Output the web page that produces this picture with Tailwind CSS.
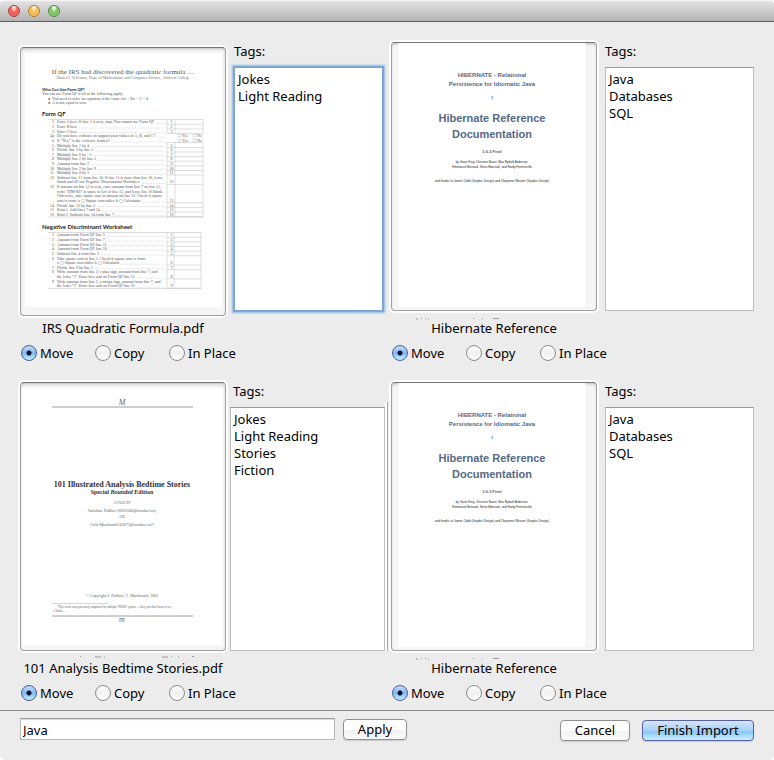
<!DOCTYPE html>
<html lang="en">
<head>
<meta charset="utf-8">
<title>Import Documents</title>
<script src="https://cdn.jsdelivr.net/npm/@tailwindcss/browser@4"></script>
</head>
<body class="bg-white font-['Noto_Sans','Open_Sans',sans-serif] text-[13px] leading-5 text-black">

<!-- Page artwork shared by the previews -->
<svg class="hidden" aria-hidden="true">
  <symbol id="hibernate-page" viewBox="392 43 204 267">
    <rect x="398.5" y="43" width="187" height="264" fill="#fff"/>
    <g font-family="Liberation Sans, Arial, sans-serif" font-weight="bold" text-anchor="middle" fill="#566986">
      <text x="492" y="76.5" font-size="6">HIBERNATE - Relational</text>
      <text x="492" y="86" font-size="6">Persistence for Idiomatic Java</text>
      <text x="492" y="98.5" font-size="4">1</text>
      <text x="492" y="122" font-size="11">Hibernate Reference</text>
      <text x="492" y="138" font-size="11">Documentation</text>
      <text x="492" y="152.5" font-size="4">3.6.3.Final</text>
    </g>
    <g font-family="Liberation Sans, Arial, sans-serif" font-size="3" text-anchor="middle" fill="#222">
      <text x="492" y="163">by Gavin King, Christian Bauer, Max Rydahl Andersen,</text>
      <text x="492" y="168">Emmanuel Bernard, Steve Ebersole, and Hardy Ferentschik</text>
      <text x="492" y="182">and thanks to James Cobb (Graphic Design) and Cheyenne Weaver (Graphic Design)</text>
    </g>
  </symbol>
</svg>

<div class="flex min-h-screen flex-col overflow-hidden rounded-[5px] bg-[#ececec]">
  <header class="flex h-[22px] items-center gap-2 border-b border-[#5c5c5c] bg-linear-to-b from-[#e6e6e6] to-[#b3b3b3] pl-2 shadow-[inset_0_1px_0_#f6f6f6]">
    <button type="button" aria-label="Close" class="size-3 rounded-full border border-[#a3403b] bg-[radial-gradient(ellipse_at_50%_10%,#ffe9e6_10%,#f2605a_45%,#ee5f5a_65%,#ffb5a8)]"></button>
    <button type="button" aria-label="Minimize" class="size-3 rounded-full border border-[#a97830] bg-[radial-gradient(ellipse_at_50%_10%,#fff6e0_10%,#f5b94f_45%,#f5bb55_65%,#ffee9c)]"></button>
    <button type="button" aria-label="Zoom" class="size-3 rounded-full border border-[#4f8440] bg-[radial-gradient(ellipse_at_50%_10%,#f0ffe9_10%,#82c265_45%,#84c46a_65%,#ccf7a9)]"></button>
  </header>

  <main class="grid grid-cols-2 gap-x-2 gap-y-[19px] px-5 pt-5 pb-[7px]">

    <section>
      <div class="flex h-[269px] gap-2">
        <div class="mt-[5px] -mb-[5px] h-[269px] w-[206px] shrink-0 overflow-hidden rounded-[4px] border border-[#a0a0a0] border-t-[#747474] bg-[#f5f5f5] shadow-[0_0_0_2px_#fdfdfd,inset_0_2px_3px_-1px_#bbb]">
          <svg id="irs-page" class="block size-full" viewBox="21 48 204 267" role="img" aria-label="Preview of IRS Quadratic Formula.pdf">
            <rect x="25" y="53" width="197" height="254" fill="#fff"/>
            <g font-family="Liberation Serif, serif" fill="#555">
              <text x="123" y="74" font-size="7" text-anchor="middle">If the IRS had discovered the quadratic formula …</text>
              <text x="123" y="79" font-size="4" text-anchor="middle" fill="#777">Daniel J. Velleman, Dept. of Mathematics and Computer Science, Amherst College</text>
              <text x="42" y="95" font-size="4">You can use Form QF if all of the following apply:</text>
              <text x="48" y="100" font-size="4">●</text>
              <text x="52" y="100" font-size="4">You need to solve an equation of the form Ax² + Bx + C = 0.</text>
              <text x="48" y="104" font-size="4">●</text>
              <text x="52" y="104" font-size="4">A is not equal to zero.</text>
            </g>
            <g font-family="Lato, sans-serif" font-weight="bold" fill="#222">
              <text x="42" y="91" font-size="4">Who Can Use Form QF?</text>
              <text x="42" y="116" font-size="6">Form QF</text>
              <text x="42" y="229" font-size="6">Negative Discriminant Worksheet</text>
            </g>
          </svg>
        </div>
        <div class="flex min-w-0 flex-1 flex-col">
          <label for="tags-1" class="h-[25px] leading-[18px]">Tags:</label>
          <textarea id="tags-1" class="block w-full flex-1 resize-none border border-[#79a4d2] bg-white px-[3px] py-[3px] leading-[17px] shadow-[0_0_0_1px_#7aa8d8,0_0_2px_2px_#8fb7e0] outline-none">Jokes
Light Reading</textarea>
        </div>
      </div>
      <h2 class="mt-[7px] w-[206px] text-center whitespace-nowrap">IRS Quadratic Formula.pdf</h2>
      <div role="radiogroup" aria-label="Import mode" class="mt-[5px] flex pl-px">
        <label class="flex w-[74px] items-center gap-[3px] whitespace-nowrap"><input type="radio" name="mode-1" checked class="size-4 shrink-0 appearance-none rounded-full border border-[#8c8c8c] bg-linear-to-b from-white via-[#f0f0f0] to-white checked:border-[#4a5a9c] checked:bg-[radial-gradient(circle,#0c1638_0_2px,transparent_3px),linear-gradient(#c9dcf5,#7fb9ef_50%,#c5f1ff)]">Move</label>
        <label class="flex w-[74px] items-center gap-[3px] whitespace-nowrap"><input type="radio" name="mode-1" class="size-4 shrink-0 appearance-none rounded-full border border-[#8c8c8c] bg-linear-to-b from-white via-[#f0f0f0] to-white checked:border-[#4a5a9c] checked:bg-[radial-gradient(circle,#0c1638_0_2px,transparent_3px),linear-gradient(#c9dcf5,#7fb9ef_50%,#c5f1ff)]">Copy</label>
        <label class="flex w-[74px] items-center gap-[3px] whitespace-nowrap"><input type="radio" name="mode-1" class="size-4 shrink-0 appearance-none rounded-full border border-[#8c8c8c] bg-linear-to-b from-white via-[#f0f0f0] to-white checked:border-[#4a5a9c] checked:bg-[radial-gradient(circle,#0c1638_0_2px,transparent_3px),linear-gradient(#c9dcf5,#7fb9ef_50%,#c5f1ff)]">In Place</label>
      </div>
    </section>

    <section>
      <div class="flex h-[269px] gap-2">
        <div class="h-[269px] w-[206px] shrink-0 overflow-hidden rounded-[4px] border border-[#a0a0a0] border-t-[#747474] bg-[#f5f5f5] shadow-[0_0_0_2px_#fdfdfd,inset_0_2px_3px_-1px_#bbb]">
          <svg class="block size-full" role="img" aria-label="Preview of Hibernate Reference"><use href="#hibernate-page"/></svg>
        </div>
        <div class="flex min-w-0 flex-1 flex-col">
          <label for="tags-2" class="h-[25px] leading-[18px]">Tags:</label>
          <textarea id="tags-2" class="block w-full flex-1 resize-none border border-[#bebebe] border-t-[#9a9a9a] bg-white px-[3px] py-[3px] leading-[17px] outline-none">Java
Databases
SQL</textarea>
        </div>
      </div>
      <h2 class="relative mt-[7px] w-[206px] text-center whitespace-nowrap">
        <svg class="absolute top-0 left-0 h-[2px] w-[206px]" viewBox="0 0 206 2" aria-hidden="true"><path d="M25 1h2M30 .5h1M34 .5h1M37 1h1M82 .5h1M91 1h1M102 .5h6" stroke="#9a9a9a"/></svg>
        Hibernate Reference</h2>
      <div role="radiogroup" aria-label="Import mode" class="mt-[5px] flex pl-px">
        <label class="flex w-[74px] items-center gap-[3px] whitespace-nowrap"><input type="radio" name="mode-2" checked class="size-4 shrink-0 appearance-none rounded-full border border-[#8c8c8c] bg-linear-to-b from-white via-[#f0f0f0] to-white checked:border-[#4a5a9c] checked:bg-[radial-gradient(circle,#0c1638_0_2px,transparent_3px),linear-gradient(#c9dcf5,#7fb9ef_50%,#c5f1ff)]">Move</label>
        <label class="flex w-[74px] items-center gap-[3px] whitespace-nowrap"><input type="radio" name="mode-2" class="size-4 shrink-0 appearance-none rounded-full border border-[#8c8c8c] bg-linear-to-b from-white via-[#f0f0f0] to-white checked:border-[#4a5a9c] checked:bg-[radial-gradient(circle,#0c1638_0_2px,transparent_3px),linear-gradient(#c9dcf5,#7fb9ef_50%,#c5f1ff)]">Copy</label>
        <label class="flex w-[74px] items-center gap-[3px] whitespace-nowrap"><input type="radio" name="mode-2" class="size-4 shrink-0 appearance-none rounded-full border border-[#8c8c8c] bg-linear-to-b from-white via-[#f0f0f0] to-white checked:border-[#4a5a9c] checked:bg-[radial-gradient(circle,#0c1638_0_2px,transparent_3px),linear-gradient(#c9dcf5,#7fb9ef_50%,#c5f1ff)]">In Place</label>
      </div>
    </section>

    <section>
      <div class="relative flex h-[269px] gap-2">
        <div class="h-[269px] w-[206px] shrink-0 overflow-hidden rounded-[4px] border border-[#a0a0a0] border-t-[#747474] bg-[#f5f5f5] shadow-[0_0_0_2px_#fdfdfd,inset_0_2px_3px_-1px_#bbb]">
          <svg class="block size-full" viewBox="21 382 204 267" role="img" aria-label="Preview of 101 Analysis Bedtime Stories.pdf">
            <rect x="22" y="387" width="201" height="257" fill="#fff"/>
            <g font-family="Liberation Serif, serif" fill="#666" text-anchor="middle">
              <text x="122" y="404" font-size="8" font-style="italic">M</text>
              <text x="122" y="486" font-size="8" font-weight="bold" fill="#333">101 Illustrated Analysis Bedtime Stories</text>
              <text x="122" y="493" font-size="6" font-weight="bold" fill="#333">Special <tspan font-style="italic">Bounded</tspan> Edition</text>
              <text x="122" y="503" font-size="3">AS TOLD BY</text>
              <text x="122" y="511" font-size="4">Sunshine DuBois (SBS2000@noodnet.ca)</text>
              <text x="122" y="517" font-size="3">AND</text>
              <text x="122" y="525" font-size="4">Colin Macdonald (02073@noodnet.ca)*</text>
              <text x="122" y="596" font-size="4">© Copyright S. DuBois, C. Macdonald, 2001</text>
              <text x="57" y="607" font-size="3" text-anchor="start">*This work was generously supported by multiple NSERC grants — they just don't know it yet</text>
              <text x="52" y="611" font-size="3" text-anchor="start">– I think…</text>
              <text x="122" y="621" font-size="8" font-style="italic">m</text>
            </g>
            <path d="M52 406h141M52 615h141" stroke="#888" stroke-width=".8"/>
            <path d="M52 602.500h56" stroke="#aaa" stroke-width=".5"/>
          </svg>
        </div>
        <div class="-mr-0.5 -ml-1 flex min-w-0 flex-1 flex-col">
          <label for="tags-3" class="h-[25px] pl-[3px] leading-[18px]">Tags:</label>
          <textarea id="tags-3" class="block w-full flex-1 resize-none border border-[#bebebe] border-t-[#9a9a9a] bg-white px-[3px] py-[3px] leading-[17px] outline-none">Jokes
Light Reading
Stories
Fiction</textarea>
        </div>
        <div class="absolute top-5 -right-[5px] bottom-0 w-[3px] border-r border-[#a8a8a8] bg-white"></div>
      </div>
      <h2 class="relative mt-[7px] w-[206px] text-center whitespace-nowrap">
        <svg class="absolute -top-0.5 left-0 h-[2px] w-[206px]" viewBox="0 0 206 2" aria-hidden="true"><path d="M60 .5h1M75 1h6M84 1h1M142 1h6M151 .5h1M158 1h1M172 .5h2" stroke="#9a9a9a"/></svg>
        101 Analysis Bedtime Stories.pdf</h2>
      <div role="radiogroup" aria-label="Import mode" class="mt-[5px] flex pl-px">
        <label class="flex w-[74px] items-center gap-[3px] whitespace-nowrap"><input type="radio" name="mode-3" checked class="size-4 shrink-0 appearance-none rounded-full border border-[#8c8c8c] bg-linear-to-b from-white via-[#f0f0f0] to-white checked:border-[#4a5a9c] checked:bg-[radial-gradient(circle,#0c1638_0_2px,transparent_3px),linear-gradient(#c9dcf5,#7fb9ef_50%,#c5f1ff)]">Move</label>
        <label class="flex w-[74px] items-center gap-[3px] whitespace-nowrap"><input type="radio" name="mode-3" class="size-4 shrink-0 appearance-none rounded-full border border-[#8c8c8c] bg-linear-to-b from-white via-[#f0f0f0] to-white checked:border-[#4a5a9c] checked:bg-[radial-gradient(circle,#0c1638_0_2px,transparent_3px),linear-gradient(#c9dcf5,#7fb9ef_50%,#c5f1ff)]">Copy</label>
        <label class="flex w-[74px] items-center gap-[3px] whitespace-nowrap"><input type="radio" name="mode-3" class="size-4 shrink-0 appearance-none rounded-full border border-[#8c8c8c] bg-linear-to-b from-white via-[#f0f0f0] to-white checked:border-[#4a5a9c] checked:bg-[radial-gradient(circle,#0c1638_0_2px,transparent_3px),linear-gradient(#c9dcf5,#7fb9ef_50%,#c5f1ff)]">In Place</label>
      </div>
    </section>

    <section>
      <div class="flex h-[269px] gap-2">
        <div class="h-[269px] w-[206px] shrink-0 overflow-hidden rounded-[4px] border border-[#a0a0a0] border-t-[#747474] bg-[#f5f5f5] shadow-[0_0_0_2px_#fdfdfd,inset_0_2px_3px_-1px_#bbb]">
          <svg class="block size-full" role="img" aria-label="Preview of Hibernate Reference"><use href="#hibernate-page"/></svg>
        </div>
        <div class="flex min-w-0 flex-1 flex-col">
          <label for="tags-4" class="h-[25px] leading-[18px]">Tags:</label>
          <textarea id="tags-4" class="block w-full flex-1 resize-none border border-[#bebebe] border-t-[#9a9a9a] bg-white px-[3px] py-[3px] leading-[17px] outline-none">Java
Databases
SQL</textarea>
        </div>
      </div>
      <h2 class="relative mt-[7px] w-[206px] text-center whitespace-nowrap">
        <svg class="absolute top-0 left-0 h-[2px] w-[206px]" viewBox="0 0 206 2" aria-hidden="true"><path d="M25 1h2M30 .5h1M34 .5h1M37 1h1M82 .5h1M91 1h1M102 .5h6" stroke="#9a9a9a"/></svg>
        Hibernate Reference</h2>
      <div role="radiogroup" aria-label="Import mode" class="mt-[5px] flex pl-px">
        <label class="flex w-[74px] items-center gap-[3px] whitespace-nowrap"><input type="radio" name="mode-4" checked class="size-4 shrink-0 appearance-none rounded-full border border-[#8c8c8c] bg-linear-to-b from-white via-[#f0f0f0] to-white checked:border-[#4a5a9c] checked:bg-[radial-gradient(circle,#0c1638_0_2px,transparent_3px),linear-gradient(#c9dcf5,#7fb9ef_50%,#c5f1ff)]">Move</label>
        <label class="flex w-[74px] items-center gap-[3px] whitespace-nowrap"><input type="radio" name="mode-4" class="size-4 shrink-0 appearance-none rounded-full border border-[#8c8c8c] bg-linear-to-b from-white via-[#f0f0f0] to-white checked:border-[#4a5a9c] checked:bg-[radial-gradient(circle,#0c1638_0_2px,transparent_3px),linear-gradient(#c9dcf5,#7fb9ef_50%,#c5f1ff)]">Copy</label>
        <label class="flex w-[74px] items-center gap-[3px] whitespace-nowrap"><input type="radio" name="mode-4" class="size-4 shrink-0 appearance-none rounded-full border border-[#8c8c8c] bg-linear-to-b from-white via-[#f0f0f0] to-white checked:border-[#4a5a9c] checked:bg-[radial-gradient(circle,#0c1638_0_2px,transparent_3px),linear-gradient(#c9dcf5,#7fb9ef_50%,#c5f1ff)]">In Place</label>
      </div>
    </section>
  </main>

  <footer class="flex flex-1 items-start gap-2 border-t border-[#8a8a8a] px-5 pt-[7px]">
    <input type="text" value="Java" aria-label="Tag to apply" class="h-[22px] w-[315px] border border-[#b8b8b8] border-t-[#989898] bg-white px-0.5 pt-px shadow-[inset_0_1px_1px_#ddd] outline-none">
    <button type="button" class="mt-px h-[21px] w-16 rounded-[4px] border border-[#909090] bg-linear-to-b from-white from-50% via-[#f1f1f1] via-50% to-[#fafafa] leading-[19px] shadow-[0_1px_1px_#ccc]">Apply</button>
    <div class="mt-0.5 ml-auto flex gap-3">
      <button type="button" class="h-[21px] w-[70px] rounded-[4px] border border-[#909090] bg-linear-to-b from-white from-50% via-[#f1f1f1] via-50% to-[#fafafa] leading-[19px] shadow-[0_1px_1px_#ccc]">Cancel</button>
      <button type="button" class="h-[21px] w-28 rounded-[4px] border border-[#55609c] bg-[linear-gradient(#d5e6f9,#a5d0f7_50%,#84c1f8_50%,#c4efff)] leading-[19px] whitespace-nowrap shadow-[0_1px_1px_#ccc]">Finish Import</button>
    </div>
  </footer>
</div>

<script>
  // Numbered rows of the tax form, one entry per printed line: [number, text, dotted leader, box label]
  const formRows = [
    ['1', 'Enter A here. If line 1 is zero, stop. You cannot use Form QF', 1, '1'],
    ['2', 'Enter B here', 1, '2'], ['3', 'Enter C here', 1, '3'],
    ['4a', 'Do you have evidence to support your values of A, B, and C?', 1, ''],
    ['b', 'If “Yes,” is the evidence written?', 1, ''],
    ['5', 'Multiply line 1 by 4', 1, '5'], ['6', 'Divide line 2 by line 5', 1, '6'],
    ['7', 'Multiply line 6 by −1', 1, '7'], ['8', 'Multiply line 2 by line 5', 1, '8'],
    ['9', 'Amount from line 2', 1, '9'], ['10', 'Multiply line 2 by line 9', 1, '10'],
    ['11', 'Multiply line 8 by 3', 1, '11'],
    ['12', 'Subtract line 11 from line 10. If line 11 is more than line 10, leave', 0, ''],
    ['', 'blank and fill out Negative Discriminant Worksheet', 1, '12'],
    ['13', 'If amount on line 12 is zero, enter amount from line 7 on line 15,', 0, ''],
    ['', 'write “DM-R6” in space to left of line 15, and leave line 16 blank.', 0, ''],
    ['', 'Otherwise, take square root of amount on line 12. Check if square', 0, ''],
    ['', 'root is from:  a ▢ Square root tables   b ▢ Calculator', 1, '13'],
    ['14', 'Divide line 13 by line 5', 1, '14'], ['15', 'Root 1. Add lines 7 and 14', 1, '15'],
    ['16', 'Root 2. Subtract line 14 from line 7', 1, '16'],
  ];
  const worksheetRows = [
    ['1', 'Amount from Form QF line 5', 1, '1'], ['2', 'Amount from Form QF line 7', 1, '2'],
    ['3', 'Amount from Form QF line 11', 1, '3'], ['4', 'Amount from Form QF line 10', 1, '4'],
    ['5', 'Subtract line 4 from line 3', 1, '5'],
    ['6', 'Take square root of line 5. Check if square root is from:', 0, ''],
    ['', 'a ▢ Square root tables   b ▢ Calculator', 1, '6'],
    ['7', 'Divide line 6 by line 1', 1, '7'],
    ['8', 'Write amount from line 2, a plus sign, amount from line 7, and', 0, ''],
    ['', 'the letter “i”. Enter here and on Form QF line 15', 1, '8'],
    ['9', 'Write amount from line 2, a minus sign, amount from line 7, and', 0, ''],
    ['', 'the letter “i”. Enter here and on Form QF line 16', 1, '9'],
  ];
  const page = document.getElementById('irs-page');
  function add(name, attrs, text) {
    const el = document.createElementNS('http://www.w3.org/2000/svg', name);
    for (const key in attrs) el.setAttribute(key, attrs[key]);
    if (text) el.textContent = text;
    page.appendChild(el);
    return el;
  }
  function rule(d) { add('path', { d, stroke: '#bbb', 'stroke-width': 0.5, fill: 'none' }); }
  function drawRows(rows, top, right) {
    const pitch = 4.62;
    const font = { 'font-family': 'Liberation Serif, serif', 'font-size': 4, fill: '#555' };
    rule(`M48 ${top}H${right}`);
    rows.forEach(([num, text, leader, box], i) => {
      const y = top + 3.9 + i * pitch;
      if (num) add('text', { ...font, x: 54, y, 'text-anchor': 'end' }, num);
      const line = add('text', { ...font, x: 57, y }, text);
      const end = 57 + line.getBBox().width + 2;
      if (leader && end < 165) add('path', { d: `M${end} ${y}H165`, stroke: '#999', 'stroke-width': 0.5, 'stroke-dasharray': '.6 1' });
      if (box) {
        add('text', { ...font, x: 171.5, y, 'text-anchor': 'middle' }, box);
        rule(`M167 ${y + 0.9}H${right}`);
      }
    });
  }
  drawRows(formRows, 119.5, 203);
  rule('M167 119.5V133.4M175 119.5V133.4M203 119.5V133.4M167 142.6H203M167 142.6V217M175 142.6V217M203 142.6V217M48 217H203');
  for (const y of [137, 142]) {
    rule(`M178 ${y - 3}h3v3h-3zM193 ${y - 3}h3v3h-3z`);
    add('text', { x: 182, y, 'font-size': 4, 'font-family': 'Liberation Serif, serif', fill: '#666' }, 'Yes');
    add('text', { x: 197, y, 'font-size': 4, 'font-family': 'Liberation Serif, serif', fill: '#666' }, 'No');
  }
  drawRows(worksheetRows, 232.5, 201);
  rule('M167 232.5V288.5M174 232.5V288.5M201 232.5V288.5M48 288.5H201');
</script>
</body>
</html>
